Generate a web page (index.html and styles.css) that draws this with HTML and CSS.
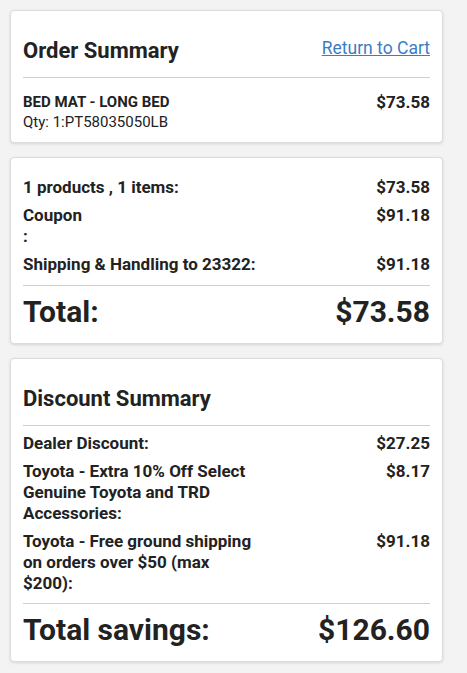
FILE: index.html
```html
<!DOCTYPE html>
<html>
<head>
<meta charset="utf-8">
<link rel="stylesheet" href="styles.css">
</head>
<body>
<div class="page">
  <section class="card card-order">
    <div class="card-head">
      <h2 class="card-title">Order Summary</h2>
      <a class="return-link" href="#">Return to Cart</a>
    </div>
    <hr class="divider">
    <div class="item">
      <div class="item-info">
        <div class="item-name">BED MAT - LONG BED</div>
        <div class="item-qty">Qty: 1:PT58035050LB</div>
      </div>
      <div class="item-price">$73.58</div>
    </div>
  </section>

  <section class="card card-totals">
    <div class="row">
      <div class="row-label">1 products , 1 items:</div>
      <div class="row-value">$73.58</div>
    </div>
    <div class="row">
      <div class="row-label">Coupon<br>:</div>
      <div class="row-value">$91.18</div>
    </div>
    <div class="row">
      <div class="row-label">Shipping &amp; Handling to 23322:</div>
      <div class="row-value">$91.18</div>
    </div>
    <hr class="divider">
    <div class="grand">
      <div>Total:</div>
      <div>$73.58</div>
    </div>
  </section>

  <section class="card card-discount">
    <h2 class="card-title">Discount Summary</h2>
    <hr class="divider divider-head">
    <div class="row">
      <div class="row-label narrow">Dealer Discount:</div>
      <div class="row-value">$27.25</div>
    </div>
    <div class="row">
      <div class="row-label narrow">Toyota - Extra 10% Off Select Genuine Toyota and TRD Accessories:</div>
      <div class="row-value">$8.17</div>
    </div>
    <div class="row">
      <div class="row-label narrow">Toyota - Free ground shipping on orders over $50 (max $200):</div>
      <div class="row-value">$91.18</div>
    </div>
    <hr class="divider divider-foot">
    <div class="grand">
      <div>Total savings:</div>
      <div>$126.60</div>
    </div>
  </section>
</div>
</body>
</html>
```

FILE: styles.css
```css
* { box-sizing: border-box; }
html, body {
  margin: 0;
  padding: 0;
  background: #f3f3f3;
  font-family: Roboto, "Liberation Sans", Arial, sans-serif;
  color: #222;
}
.page {
  display: flex;
  flex-direction: column;
  gap: 14px;
  padding: 10px 24px 12px 10px;
}
.card {
  background: #fff;
  border: 1px solid #dcdcdc;
  border-radius: 4px;
  box-shadow: 0 1px 3px rgba(0,0,0,0.12);
  padding: 0 12px;
}
.card-order { padding-top: 25px; padding-bottom: 10px; }
.card-totals { padding-top: 19px; padding-bottom: 13px; }
.card-discount { padding-top: 25px; padding-bottom: 13px; }

.card-head {
  display: flex;
  justify-content: space-between;
  align-items: flex-start;
}
.card-title {
  margin: 0;
  font-size: 22px;
  font-weight: 700;
  line-height: 30px;
}
.return-link {
  color: #3b7dc4;
  font-size: 17.5px;
  line-height: 24px;
  text-decoration: underline;
}
.divider {
  border: 0;
  border-top: 1px solid #cfcfcf;
  margin: 11px 0 0;
}
.card-order .divider { margin-bottom: 14px; }
.item {
  display: flex;
  justify-content: space-between;
  align-items: flex-start;
}
.item-name {
  font-size: 15px;
  font-weight: 700;
  line-height: 20px;
}
.item-qty {
  font-size: 15px;
  line-height: 20px;
}
.item-price {
  font-size: 17px;
  font-weight: 700;
  line-height: 20px;
}
.row {
  display: flex;
  justify-content: space-between;
  align-items: flex-start;
  font-size: 17px;
  font-weight: 700;
  line-height: 21px;
  margin-bottom: 7px;
}
.row-label.narrow { width: 236px; }
.row-value { text-align: right; font-weight: 700; }
.row + .divider { margin-top: 10px; }
.divider-head { margin-bottom: 7px; }
.row + .divider-foot { margin-top: 9px; }
.grand {
  display: flex;
  justify-content: space-between;
  font-size: 30px;
  font-weight: 700;
  line-height: 36px;
  margin-top: 8px;
}
```
